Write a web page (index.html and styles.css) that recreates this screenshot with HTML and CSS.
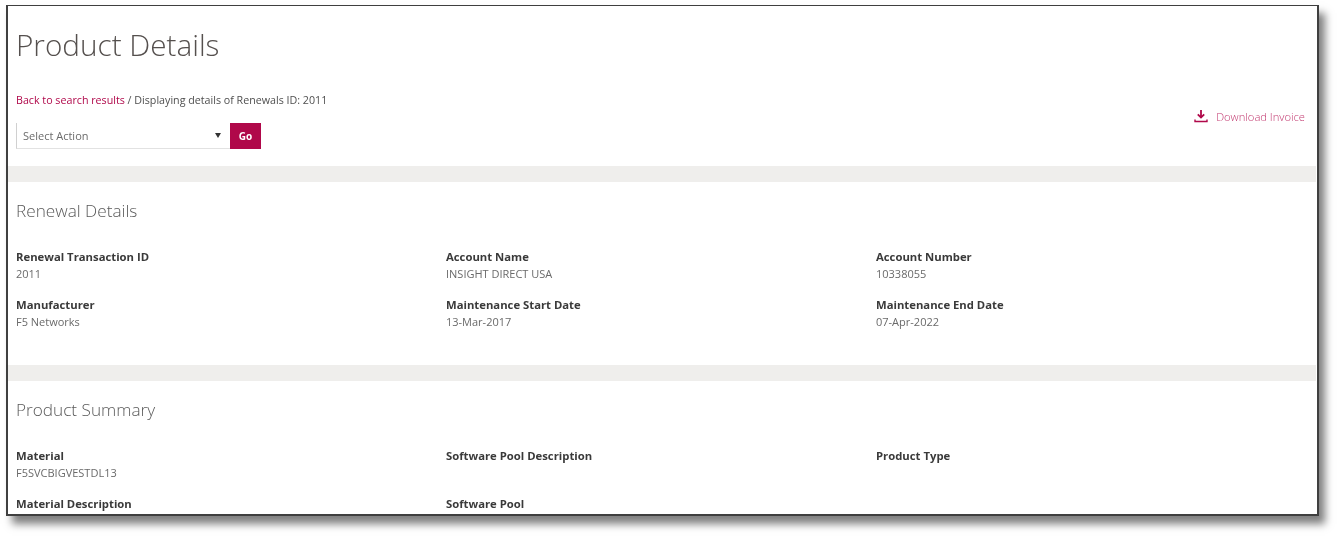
FILE: index.html
```html
<!DOCTYPE html>
<html lang="en">
<head>
<meta charset="utf-8">
<title>Product Details</title>
<link rel="stylesheet" href="styles.css">
</head>
<body>
<main class="window">
  <div class="content">
    <header class="top">
      <h1 class="title">Product Details</h1>
      <div class="toolbar">
        <div class="toolbar-left">
          <p class="crumbs"><a class="link" href="#">Back to search results</a> / Displaying details of Renewals ID: 2011</p>
          <div class="action">
            <div class="select"><span>Select Action</span><span class="caret"></span></div>
            <button class="go" type="button">Go</button>
          </div>
        </div>
        <a class="download" href="#">
          <svg class="dl-icon" width="14" height="14" viewBox="0 0 14 14" aria-hidden="true"><path d="M7 1v7M3.8 5.4 7 8.6l3.2-3.2" fill="none" stroke="#b0084a" stroke-width="1.8"/><path d="M1 10.5v2h12v-2" fill="none" stroke="#b0084a" stroke-width="1.4"/></svg>
          <span>Download Invoice</span>
        </a>
      </div>
    </header>
    <section class="panel panel-renewal">
      <h2 class="heading">Renewal Details</h2>
      <div class="grid">
        <div class="field"><h3>Renewal Transaction ID</h3><p>2011</p></div>
        <div class="field"><h3>Account Name</h3><p>INSIGHT DIRECT USA</p></div>
        <div class="field"><h3>Account Number</h3><p>10338055</p></div>
        <div class="field"><h3>Manufacturer</h3><p>F5 Networks</p></div>
        <div class="field"><h3>Maintenance Start Date</h3><p>13-Mar-2017</p></div>
        <div class="field"><h3>Maintenance End Date</h3><p>07-Apr-2022</p></div>
      </div>
    </section>
    <section class="panel">
      <h2 class="heading">Product Summary</h2>
      <div class="grid">
        <div class="field"><h3>Material</h3><p>F5SVCBIGVESTDL13</p></div>
        <div class="field"><h3>Software Pool Description</h3><p></p></div>
        <div class="field"><h3>Product Type</h3><p></p></div>
        <div class="field"><h3>Material Description</h3><p></p></div>
        <div class="field"><h3>Software Pool</h3><p></p></div>
      </div>
    </section>
  </div>
</main>
</body>
</html>
```
FILE: styles.css
```css
* { box-sizing: border-box; }
html, body { margin: 0; background: #fff; }
body {
  padding: 5px 0 0 6px;
  height: 538px;
  overflow: hidden;
  font-family: "Open Sans", "Noto Sans", sans-serif;
  color: #4a4a4a;
}
.window {
  width: 1313px;
  height: 511px;
  background: #fff;
  border: 1px solid #3f3f3f;
  border-width: 1px 2px 2px 2px;
  box-shadow: 6px 8px 8px rgba(0, 0, 0, .5);
  overflow: hidden;
}
.content { filter: blur(.5px); }
.top {
  height: 160px;
  padding: 0 12px 0 8px;
}
.title {
  margin: 0;
  padding-top: 19px;
  height: 87px;
  font-size: 29.7px;
  line-height: 40px;
  font-weight: 300;
  color: #55504e;
}
.toolbar { display: flex; justify-content: space-between; }
.crumbs {
  margin: 0 0 16px;
  font-size: 10.7px;
  line-height: 14px;
  color: #4f4f4f;
}
.link { color: #b0084a; text-decoration: none; }
.action { display: flex; align-items: stretch; height: 26px; }
.select {
  width: 214px;
  display: flex;
  align-items: center;
  justify-content: space-between;
  padding: 0 9px 1px 6px;
  border-left: 1px solid #d0d0d0;
  border-bottom: 1px solid #e2e2e2;
  font-size: 11px;
  color: #6b6b6b;
}
.caret {
  width: 0;
  height: 0;
  border-left: 3.5px solid transparent;
  border-right: 3.5px solid transparent;
  border-top: 5px solid #333;
}
.go {
  width: 31px;
  border: 0;
  padding: 0;
  background: #b0084a;
  color: #fff;
  font: 700 10px "Open Sans", sans-serif;
}
.download {
  display: flex;
  align-items: center;
  gap: 8px;
  height: 16px;
  margin-top: 15px;
  font-size: 11.2px;
  font-weight: 300;
  color: #c2386f;
  text-decoration: none;
}
.panel {
  border-top: 16px solid #efeeec;
  margin-right: 1px;
  padding: 0 8px;
  height: 199px;
}
.heading {
  margin: 0;
  padding-top: 19px;
  height: 67px;
  font-size: 17.2px;
  line-height: 20px;
  font-weight: 300;
  color: #5a5a5a;
}
.grid {
  display: grid;
  grid-template-columns: repeat(3, 430px);
  grid-auto-rows: 48px;
}
.field h3 {
  margin: 0;
  font-size: 11.3px;
  line-height: 16px;
  font-weight: 700;
  color: #3a3a3a;
}
.field p {
  margin: 1px 0 0;
  font-size: 11px;
  line-height: 16px;
  font-weight: 400;
  color: #6a6a6a;
}
```
